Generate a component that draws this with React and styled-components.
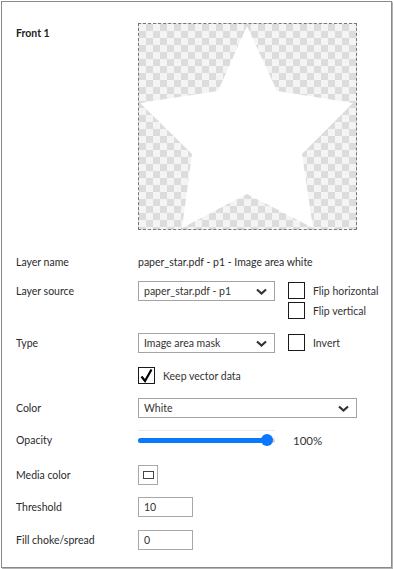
import styled, { createGlobalStyle } from "styled-components";

const GlobalStyle = createGlobalStyle`
  body {
    margin: 0;
    background: #fff;
    font-family: Lato, "Open Sans", sans-serif;
    font-size: 10.5px;
    color: #2b2b2b;
  }
`;

const Panel = styled.div`
  box-sizing: border-box;
  margin: 1px;
  width: 391px;
  height: 567px;
  border: 1px solid #8a8a8a;
  box-shadow: 1px 1px 0 #b5b5b5;
  padding: 21px 0 0 14px;
  display: flex;
  flex-direction: column;
`;

const Row = styled.div`
  display: grid;
  grid-template-columns: 122px 1fr;
  align-items: start;
  margin-top: ${(p) => p.$mt || 0}px;
`;

const Label = styled.div`
  line-height: 20px;
  height: 20px;
  white-space: nowrap;
  font-weight: ${(p) => (p.$bold ? 700 : 400)};
  color: ${(p) => (p.$bold ? "#222" : "#2b2b2b")};
`;

const Value = styled.div`
  line-height: 20px;
  white-space: nowrap;
`;

const Preview = styled.div`
  position: relative;
  box-sizing: border-box;
  width: 219px;
  height: 207px;
  border: 1px dashed #777;
  background: repeating-conic-gradient(#dcdcdc 0 25%, #f4f4f4 0 50%) 0 0 / 14px 14px;
  svg {
    display: block;
  }
`;

const Controls = styled.div`
  display: flex;
  align-items: flex-start;
  gap: 13px;
`;

const Select = styled.div`
  box-sizing: border-box;
  width: ${(p) => p.$w}px;
  height: 20px;
  border: 1px solid #a3a3a3;
  background: #fff;
  display: flex;
  align-items: center;
  justify-content: space-between;
  padding: 0 7px 0 5px;
  line-height: 18px;
  color: #333;
`;

const CheckColumn = styled.div`
  display: flex;
  flex-direction: column;
  gap: 3px;
  padding-top: 1px;
`;

const CheckRow = styled.label`
  display: flex;
  align-items: center;
  gap: 8px;
  height: 17px;
  white-space: nowrap;
  color: #333;
`;

const Box = styled.span`
  box-sizing: border-box;
  width: 17px;
  height: 17px;
  border: 1px solid #1a1a1a;
  background: #fff;
  display: flex;
  align-items: center;
  justify-content: center;
`;

const SliderWrap = styled.div`
  display: flex;
  align-items: center;
  gap: 18px;
  height: 20px;
`;

const Track = styled.div`
  position: relative;
  width: 137px;
  height: 20px;
  border-top: 1px solid #ececec;
  box-sizing: border-box;
  &::before {
    content: "";
    position: absolute;
    left: 0;
    right: 0;
    top: 7px;
    height: 5px;
    border-radius: 3px;
    background: #d0d0d0;
  }
  &::after {
    content: "";
    position: absolute;
    left: 0;
    width: 131px;
    top: 7px;
    height: 5px;
    border-radius: 3px;
    background: #0a78fa;
  }
`;

const Thumb = styled.span`
  position: absolute;
  z-index: 1;
  left: 123px;
  top: 3px;
  width: 12px;
  height: 12px;
  border-radius: 50%;
  background: #0a78fa;
`;

const Percent = styled.span`
  font-size: 11.5px;
  color: #333;
`;

const Swatch = styled.div`
  box-sizing: border-box;
  width: 20px;
  height: 20px;
  border: 1px solid #a8a8a8;
  display: flex;
  align-items: center;
  justify-content: center;
  span {
    box-sizing: border-box;
    width: 11px;
    height: 8px;
    border: 1px solid #444;
    background: #fff;
  }
`;

const Input = styled.div`
  box-sizing: border-box;
  width: 55px;
  height: 20px;
  border: 1px solid #a8a8a8;
  padding-left: 5px;
  line-height: 18px;
  color: #333;
`;

const Chevron = () => (
  <svg width="11" height="7" viewBox="0 0 11 7">
    <polyline points="1,1.5 5.5,5.5 10,1.5" fill="none" stroke="#333" strokeWidth="2.2" />
  </svg>
);

const Check = ({ checked, label }) => (
  <CheckRow>
    <Box>
      {checked && (
        <svg width="15" height="15" viewBox="0 0 15 15">
          <path d="M2.5 8.5 L6 13 L12.5 1.5" fill="none" stroke="#000" strokeWidth="2.2" />
        </svg>
      )}
    </Box>
    {label}
  </CheckRow>
);

const Star = () => (
  <svg width="217" height="205" viewBox="0 0 217 205">
    <polygon
      fill="#fff"
      points="108,2 138,67 214,79 163,130 174,204 108,170 43,204 53,130 1,79 79,67"
    />
  </svg>
);

const App = () => {
  return (
    <>
      <GlobalStyle />
      <Panel>
        <Row>
          <Label $bold>Front 1</Label>
          <Preview>
            <Star />
          </Preview>
        </Row>
        <Row $mt={22}>
          <Label>Layer name</Label>
          <Value>paper_star.pdf - p1 - Image area white</Value>
        </Row>
        <Row $mt={9}>
          <Label>Layer source</Label>
          <Controls>
            <Select $w={137}>
              paper_star.pdf - p1
              <Chevron />
            </Select>
            <CheckColumn>
              <Check label="Flip horizontal" />
              <Check label="Flip vertical" />
            </CheckColumn>
          </Controls>
        </Row>
        <Row $mt={14}>
          <Label>Type</Label>
          <Controls>
            <Select $w={137}>
              Image area mask
              <Chevron />
            </Select>
            <CheckColumn>
              <Check label="Invert" />
            </CheckColumn>
          </Controls>
        </Row>
        <Row $mt={14}>
          <Label />
          <Check checked label="Keep vector data" />
        </Row>
        <Row $mt={11}>
          <Label>Color</Label>
          <Select $w={219}>
            White
            <Chevron />
          </Select>
        </Row>
        <Row $mt={12}>
          <Label>Opacity</Label>
          <SliderWrap>
            <Track>
              <Thumb />
            </Track>
            <Percent>100%</Percent>
          </SliderWrap>
        </Row>
        <Row $mt={15}>
          <Label>Media color</Label>
          <Swatch>
            <span />
          </Swatch>
        </Row>
        <Row $mt={12}>
          <Label>Threshold</Label>
          <Input>10</Input>
        </Row>
        <Row $mt={13}>
          <Label>Fill choke/spread</Label>
          <Input>0</Input>
        </Row>
      </Panel>
    </>
  );
};

export default App;
